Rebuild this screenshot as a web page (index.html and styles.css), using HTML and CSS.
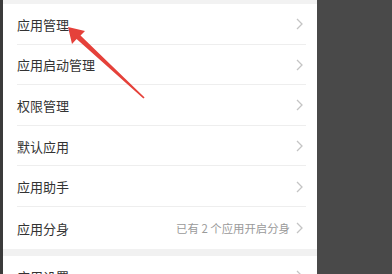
FILE: index.html
```html
<!DOCTYPE html>
<html lang="zh">
<head>
<meta charset="utf-8">
<link rel="stylesheet" href="styles.css">
</head>
<body>
<div class="screen">
  <div class="edge-left"></div>
  <div class="panel">
    <div class="band-top"></div>
    <div class="group">
      <div class="row"><span class="label">应用管理</span><svg class="chev" viewBox="0 0 7 12"><polyline points="1,1 6,6 1,11"/></svg></div>
      <div class="row"><span class="label">应用启动管理</span><svg class="chev" viewBox="0 0 7 12"><polyline points="1,1 6,6 1,11"/></svg></div>
      <div class="row"><span class="label">权限管理</span><svg class="chev" viewBox="0 0 7 12"><polyline points="1,1 6,6 1,11"/></svg></div>
      <div class="row"><span class="label">默认应用</span><svg class="chev" viewBox="0 0 7 12"><polyline points="1,1 6,6 1,11"/></svg></div>
      <div class="row"><span class="label">应用助手</span><svg class="chev" viewBox="0 0 7 12"><polyline points="1,1 6,6 1,11"/></svg></div>
      <div class="row last"><span class="label">应用分身</span><span class="value">已有 2 个应用开启分身</span><svg class="chev" viewBox="0 0 7 12"><polyline points="1,1 6,6 1,11"/></svg></div>
    </div>
    <div class="band"></div>
    <div class="group">
      <div class="row"><span class="label">应用设置</span><svg class="chev" viewBox="0 0 7 12"><polyline points="1,1 6,6 1,11"/></svg></div>
    </div>
  </div>
  <div class="edge-right"></div>
  <svg class="arrow" width="392" height="274" viewBox="0 0 392 274">
    <polygon points="68,27 85,31 80.5,35.6 144.6,97.4 143.4,98.6 76.6,39 72,44" fill="#e5413a"/>
  </svg>
</div>
</body>
</html>
```

FILE: styles.css
```css
html, body {
  margin: 0;
  padding: 0;
  background: #494949;
}
.screen {
  position: relative;
  display: flex;
  width: 392px;
  height: 274px;
  overflow: hidden;
  font-family: "Noto Sans CJK SC", "Noto Sans", sans-serif;
}
.edge-left {
  width: 3px;
  flex: none;
  background: #3b3b3b;
}
.panel {
  width: 314px;
  flex: none;
  background: #fff;
  display: flex;
  flex-direction: column;
}
.edge-right {
  flex: 1;
  background: #494949;
}
.band-top {
  height: 4px;
  background: #f2f2f2;
  flex: none;
}
.band {
  height: 7px;
  background: #f1f1f1;
  flex: none;
}
.group {
  display: flex;
  flex-direction: column;
  flex: none;
}
.row {
  height: 40.6px;
  flex: none;
  box-sizing: border-box;
  margin: 0 11px 0 14px;
  padding-top: 1px;
  border-bottom: 1px solid #eeeeee;
  display: flex;
  align-items: center;
}
.row.last {
  border-bottom: none;
  height: 42px;
}
.label {
  font-size: 13px;
  color: #333;
  flex: 1;
  line-height: 1;
}
.value {
  font-size: 11.4px;
  color: #9a9a9a;
  margin-right: 6px;
  line-height: 1;
}
.chev {
  width: 7px;
  height: 12px;
  margin-right: 3px;
  fill: none;
  stroke: #c4c4c4;
  stroke-width: 1.3;
}
.arrow {
  position: absolute;
  left: 0;
  top: 0;
  pointer-events: none;
}
```
